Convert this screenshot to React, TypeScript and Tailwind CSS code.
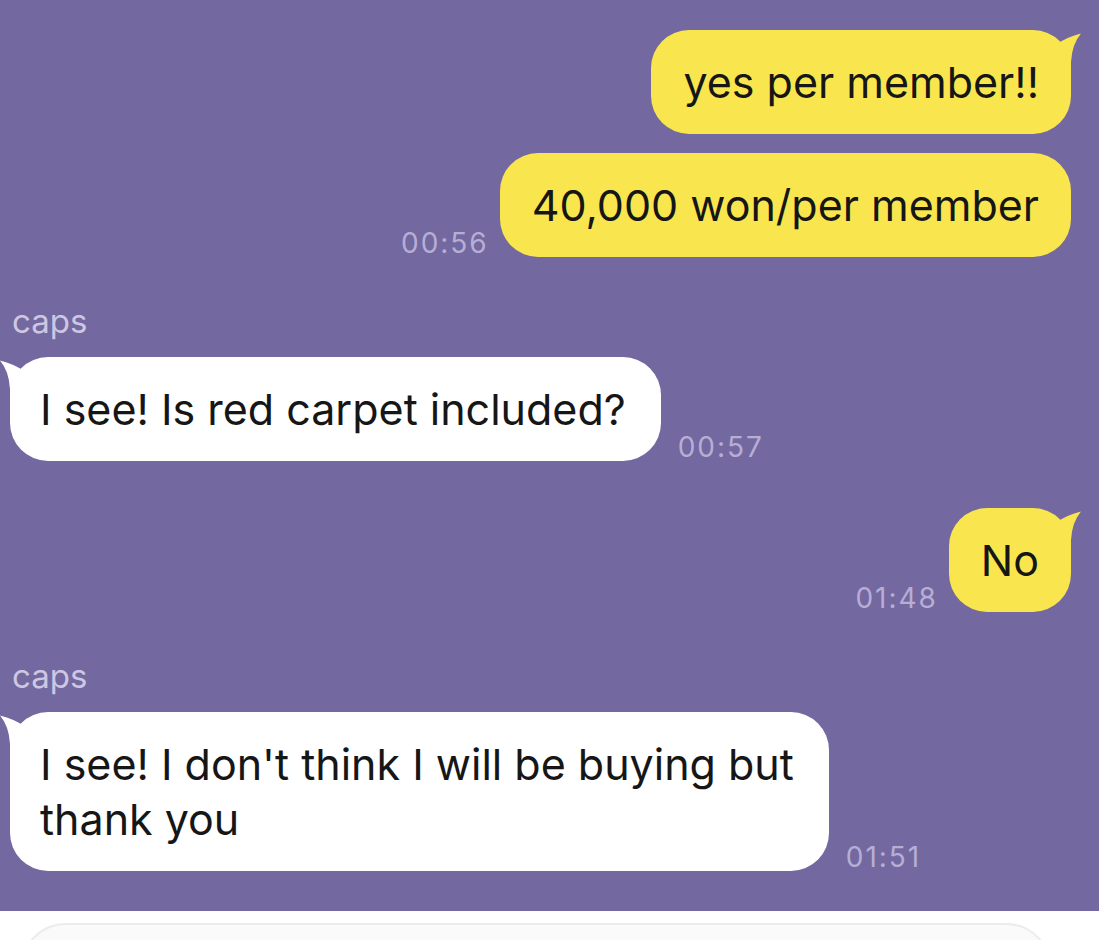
import React from "react";

const FONT = { fontFamily: "Inter, 'Noto Sans', sans-serif" };

// tail drawn over the bubble's top corner
function Tail({ color, side }: { color: string; side: "left" | "right" }) {
  return (
    <svg
      className={`absolute top-0 overflow-visible ${
        side === "right" ? "-right-[10px]" : "-left-[10px] -scale-x-100"
      }`}
      width="24"
      height="40"
      viewBox="-14 0 24 40"
      aria-hidden
    >
      <path d="M-14 14 Q-4 7 10 3.5 Q1 14 0 32 L0 40 L-14 40 Z" fill={color} />
    </svg>
  );
}

function Time({ children }: { children: React.ReactNode }) {
  return (
    <span className="text-[28px] leading-[28px] tracking-[0.07em] text-[#b6aed4]">
      {children}
    </span>
  );
}

function Mine({ text, time, tail }: { text: string; time?: string; tail?: boolean }) {
  return (
    <div className="flex items-end justify-end gap-[11px] pr-[28px]">
      {time && <Time>{time}</Time>}
      <div className="relative rounded-[38px] bg-[#f9e64e] px-[32px] py-[24.5px] text-[43px] leading-[55px] whitespace-nowrap text-[#161616]">
        {tail && <Tail color="#f9e64e" side="right" />}
        <span className="relative">{text}</span>
      </div>
    </div>
  );
}

function Theirs({ name, lines, time }: { name: string; lines: string[]; time: string }) {
  return (
    <div className="flex flex-col pl-[10px]">
      <div className="pl-[2px] text-[33px] leading-[40px] text-[#cdc7e2]">{name}</div>
      <div className="mt-[16px] flex items-end gap-[17px]">
        <div className="relative rounded-[38px] bg-white py-[24.5px] pl-[30px] pr-[35px] text-[43px] leading-[55px] whitespace-nowrap text-[#161616]">
          <Tail color="#ffffff" side="left" />
          {lines.map((l) => (
            <div key={l} className="relative">
              {l}
            </div>
          ))}
        </div>
        <Time>{time}</Time>
      </div>
    </div>
  );
}

export default function App() {
  return (
    <div className="flex h-[940px] w-[1099px] flex-col overflow-hidden bg-white" style={FONT}>
      <div className="flex h-[911px] shrink-0 flex-col bg-[#73689f] pt-[30px]">
        <Mine text="yes per member!!" tail />
        <div className="mt-[19px]">
          <Mine text="40,000 won/per member" time="00:56" />
        </div>
        <div className="mt-[44px]">
          <Theirs name="caps" lines={["I see! Is red carpet included?"]} time="00:57" />
        </div>
        <div className="mt-[47px]">
          <Mine text="No" time="01:48" tail />
        </div>
        <div className="mt-[44px]">
          <Theirs
            name="caps"
            lines={["I see! I don't think I will be buying but", "thank you"]}
            time="01:51"
          />
        </div>
      </div>
      <div className="pl-[20px] pt-[12px]">
        <div className="h-[60px] w-[1032px] rounded-t-[46px] border-2 border-[#ececec] bg-[#fafafa]" />
      </div>
    </div>
  );
}
